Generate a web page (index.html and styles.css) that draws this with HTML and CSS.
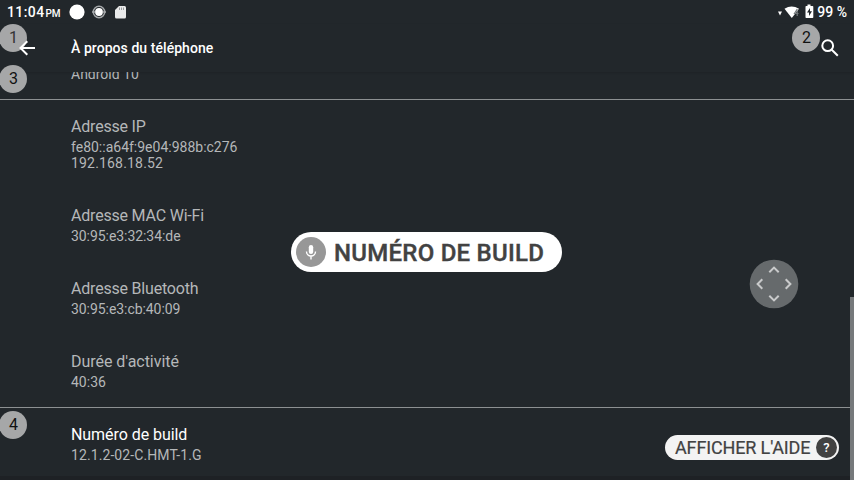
FILE: index.html
```html
<!DOCTYPE html>
<html lang="fr">
<head>
<meta charset="utf-8">
<title>À propos du téléphone</title>
<link rel="stylesheet" href="styles.css">
</head>
<body>
<div class="screen">
  <header class="status">
    <span class="clock">11:04</span><span class="ampm">PM</span>
    <svg class="notif" width="60" height="16" viewBox="0 0 60 16">
      <circle cx="8" cy="8" r="7.600" fill="#fff"/>
      <circle cx="30" cy="8" r="5.700" fill="none" stroke="#a5a8aa" stroke-width="1.500"/>
      <path d="M23 8h3M34 8h3" stroke="#a5a8aa" stroke-width="1.500"/>
      <circle cx="30" cy="8" r="3.900" fill="#fff"/>
      <path d="M50 2h5.500q1.500 0 1.500 1.500v9.500q0 1.500-1.500 1.500h-8q-1.500 0-1.500-1.500v-7z" fill="#e9eaea"/>
      <path d="M50.500 3.500v2.500M52.500 3.500v2.500M54.500 3.500v2.500" stroke="#999c9e" stroke-width="1"/>
    </svg>
    <svg class="system" width="38" height="16" viewBox="0 0 38 16">
      <path d="M0 7.500h4l-2 4z" fill="#fff"/>
      <path d="M6.500 4.700q7-4.600 14.500 0l-7.200 9.300z" fill="#fff"/>
      <path d="M19.300 5l-2.800 4.500h4M19.200 7v5" fill="none" stroke="#73787b" stroke-width="1.200"/>
      <path d="M29.500 0.500h3v1.500h2q.8 0 .8.800v10.400q0 .8-.8.800h-6.300q-.7 0-.7-.8v-10.400q0-.8.700-.8h1.300z" fill="#fff"/>
      <path d="M32 4l-3 4.500h2v3.500l3-4.800h-2z" fill="#22272b"/>
    </svg>
    <span class="battery">99 %</span>
  </header>
  <div class="toolbar">
    <h1>À propos du téléphone</h1>
    <svg class="search" width="20" height="20" viewBox="0 0 20 20" fill="none" stroke="#fff" stroke-width="2"><circle cx="7.700" cy="7.700" r="5.400"/><path d="M11.500 11.500l6.300 6.300"/></svg>
  </div>
  <main class="list">
    <section class="row first divided"><p>Android 10</p></section>
    <section class="row"><h2>Adresse IP</h2><p>fe80::a64f:9e04:988b:c276<br><span class="ipv4">192.168.18.52</span></p></section>
    <section class="row"><h2>Adresse MAC Wi-Fi</h2><p class="mac">30:95:e3:32:34:de</p></section>
    <section class="row"><h2>Adresse Bluetooth</h2><p class="mac">30:95:e3:cb:40:09</p></section>
    <section class="row divided"><h2 class="uptime">Durée d'activité</h2><p>40:36</p></section>
    <section class="row active"><h2>Numéro de build</h2><p class="build">12.1.2-02-C.HMT-1.G</p></section>
  </main>
  <div class="scrollbar"></div>
  <div class="bottom-edge"></div>

  <span class="tag tag1">1</span>
  <span class="tag tag2">2</span>
  <span class="tag tag3">3</span>
  <span class="tag tag4">4</span>
  <svg class="back" width="18" height="16" viewBox="0 0 18 16" fill="none" stroke="#fff" stroke-width="2"><path d="M16 8H2M8.300 1.200L1.500 8l6.800 6.800"/></svg>

  <div class="command">
    <svg width="30" height="30" viewBox="0 0 30 30"><circle cx="15" cy="15" r="15" fill="#979797"/><rect x="12.800" y="8" width="4.400" height="9" rx="2.200" fill="#fff"/><path d="M10.500 14.500a4.500 4.500 0 0 0 9 0M15 19v3.500" fill="none" stroke="#fff" stroke-width="1.400"/></svg>
    <span>NUMÉRO DE BUILD</span>
  </div>
  <svg class="pad" width="50" height="50" viewBox="0 0 50 50"><circle cx="25" cy="25" r="24.300" fill="#666a6c"/><path d="M20.300 13.300L25 8.600l4.700 4.700M20.300 36.700l4.700 4.700 4.700-4.700M13.300 20.300L8.600 25l4.700 4.700M36.700 20.300l4.700 4.700-4.700 4.700" fill="none" stroke="#c9cacb" stroke-width="2"/></svg>
  <div class="help"><span class="help-text">AFFICHER L'AIDE</span><span class="q">?</span></div>
</div>
</body>
</html>
```

FILE: styles.css
```css
* { box-sizing: border-box; margin: 0; padding: 0; }
body { background: #22272b; font-family: Roboto, "Liberation Sans", sans-serif; }
.screen { position: relative; width: 854px; height: 480px; overflow: hidden; display: flex; flex-direction: column; background: #22272b; }
.status { height: 24px; flex: none; display: flex; align-items: center; padding: 0 7px 0 7px; color: #fff; font-weight: 500; }
.clock { font-size: 14px; letter-spacing: .4px; }
.ampm { font-size: 10px; margin: 3px 0 0 1px; letter-spacing: -.2px; }
.notif { margin-left: 9px; }
.system { margin-left: auto; }
.battery { font-size: 14px; margin-left: 1px; }
.toolbar { height: 48px; flex: none; display: flex; align-items: center; padding: 0 14px 0 71px; box-shadow: 0 1px 2px rgba(0,0,0,.12); z-index: 1; }
.toolbar h1 { font-size: 14px; font-weight: 500; color: #fff; letter-spacing: .06px; }
.search { margin-left: auto; }
.list { flex: 1; overflow: hidden; }
.row { padding: 16px 0 18px 71px; color: #b5b7b9; }
.row h2 { font-size: 16px; font-weight: 400; line-height: 22px; margin-bottom: 1px; letter-spacing: -.2px; }
.row p { font-size: 14px; line-height: 16px; color: #b5b7b9; }
.row .ipv4 { letter-spacing: .18px; }
.row .mac { letter-spacing: -.06px; }
.row .build { letter-spacing: .09px; }
.row .uptime { letter-spacing: -.04px; }
.row.first { padding-top: 0; margin-top: -6px; }
.divided { border-bottom: 1px solid #8d9092; }
.row.divided { padding-bottom: 17px; }
.row.active h2 { color: #fff; letter-spacing: -.06px; }
.scrollbar { position: absolute; right: 0; top: 297px; width: 4px; height: 183px; background: #76797b; }
.bottom-edge { position: absolute; left: 0; bottom: 0; width: 850px; height: 4px; background: #1e2125; }
.tag { position: absolute; width: 28px; height: 28px; border-radius: 50%; background: #a6a7a8; color: #111; font-size: 16px; line-height: 28px; text-align: center; padding-left: 1px; z-index: 2; }
.tag1 { left: -1px; top: 24px; color: #333; }
.tag2 { left: 792px; top: 24px; }
.tag3 { left: -1px; top: 65px; }
.tag4 { left: -1px; top: 411px; }
.back { position: absolute; left: 19px; top: 40px; z-index: 3; }
.command { position: absolute; left: 291px; top: 232px; width: 271px; height: 40px; border-radius: 20px; background: #fff; display: flex; align-items: center; padding-left: 5px; color: #424242; font-size: 24px; font-weight: 500; white-space: nowrap; }
.command span { margin: 2px 0 0 8px; letter-spacing: .25px; -webkit-text-stroke: .4px #424242; }
.pad { position: absolute; left: 749px; top: 259px; }
.help { position: absolute; left: 665px; top: 435px; width: 174px; height: 25px; border-radius: 13px; background: #f3f3f3; display: flex; align-items: center; justify-content: space-between; padding: 0 2px 0 10px; color: #424242; font-size: 18px; white-space: nowrap; }
.help-text { letter-spacing: -.14px; -webkit-text-stroke: .2px #424242; }
.q { width: 21px; height: 21px; border-radius: 50%; background: #424242; color: #fff; font-size: 13px; font-weight: 500; line-height: 21px; text-align: center; }
```
